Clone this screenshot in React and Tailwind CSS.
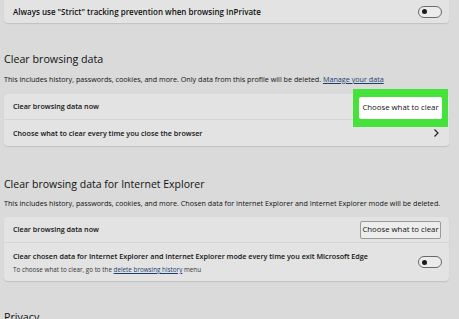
import React from "react";

function Toggle() {
  return (
    <div className="w-[24px] h-[12px] rounded-full border border-[#6a6a6a] bg-[#ebebeb] flex items-center pl-[3px] shrink-0">
      <div className="w-[5px] h-[5px] rounded-full bg-[#1a1a1a]" />
    </div>
  );
}

function Chevron() {
  return (
    <svg width="8" height="10" viewBox="0 0 8 10" className="shrink-0">
      <path d="M2.5 1.5 L6 5 L2.5 8.5" fill="none" stroke="#222" strokeWidth="1.2" />
    </svg>
  );
}

export default function App() {
  return (
    <div
      className="w-[459px] h-[319px] overflow-hidden bg-[#dadada] text-[#111] px-[4px]"
      style={{ fontFamily: '"Open Sans", "Noto Sans", sans-serif' }}
    >
      {/* Top card */}
      <div className="w-[445px] h-[23px] bg-[#e3e3e3] rounded-b-[4px] shadow-[0_1px_1px_rgba(0,0,0,0.12)] flex items-center justify-between pl-[9px] pr-[7px]">
        <span className="text-[8px] font-semibold">
          Always use "Strict" tracking prevention when browsing InPrivate
        </span>
        <Toggle />
      </div>

      {/* Clear browsing data */}
      <div className="mt-[29px] h-[15px] flex items-center text-[10.7px] leading-none">
        Clear browsing data
      </div>
      <div className="mt-[7px] h-[10px] flex items-center text-[7.2px]">
        <span>
          This includes history, passwords, cookies, and more. Only data from this profile will be deleted.{" "}
          <span className="underline text-[#1a3e6e]">Manage your data</span>
        </span>
      </div>

      <div className="relative mt-[10px] w-[445px] bg-[#e3e3e3] rounded-[4px] shadow-[0_1px_1px_rgba(0,0,0,0.12)]">
        <div className="h-[26px] flex items-center pl-[9px] text-[7.2px] font-semibold border-b border-[#d6d6d6]">
          Clear browsing data now
        </div>
        <div className="h-[26px] flex items-center justify-between pl-[9px] pr-[9px] text-[7.2px] font-semibold">
          <span>Choose what to clear every time you close the browser</span>
          <Chevron />
        </div>
        <div className="absolute left-[349px] top-[-5px] w-[95px] h-[38px] bg-[#44e23a] flex items-center justify-center">
          <div className="w-[83px] h-[22px] bg-white rounded-[2px] flex items-center justify-center text-[7.8px]">
            Choose what to clear
          </div>
        </div>
      </div>

      {/* IE section */}
      <div className="mt-[31px] h-[15px] flex items-center text-[10.5px] leading-none">
        Clear browsing data for Internet Explorer
      </div>
      <div className="mt-[6px] h-[10px] flex items-center text-[7.2px]">
        This includes history, passwords, cookies, and more. Chosen data for Internet Explorer and Internet Explorer mode will be deleted.
      </div>

      <div className="mt-[9px] w-[445px] bg-[#e3e3e3] rounded-[4px] shadow-[0_1px_1px_rgba(0,0,0,0.12)]">
        <div className="h-[26px] flex items-center justify-between pl-[9px] pr-[8px] border-b border-[#d6d6d6]">
          <span className="text-[7.2px] font-semibold">Clear browsing data now</span>
          <div className="w-[81px] h-[18px] bg-[#ededed] border border-[#9a9a9a] rounded-[2px] flex items-center justify-center text-[7.8px]">
            Choose what to clear
          </div>
        </div>
        <div className="h-[38px] flex items-center justify-between pl-[9px] pr-[7px]">
          <div className="flex flex-col gap-[4px] pt-[1px]">
            <span className="text-[7.2px] font-semibold leading-[10px]">
              Clear chosen data for Internet Explorer and Internet Explorer mode every time you exit Microsoft Edge
            </span>
            <span className="text-[6.3px] text-[#333] leading-[9px]">
              To choose what to clear, go to the{" "}
              <span className="underline text-[#1a3e6e]">delete browsing history</span> menu
            </span>
          </div>
          <Toggle />
        </div>
      </div>

      <div className="mt-[29px] h-[15px] flex items-center text-[10.7px] leading-none">
        Privacy
      </div>
    </div>
  );
}
